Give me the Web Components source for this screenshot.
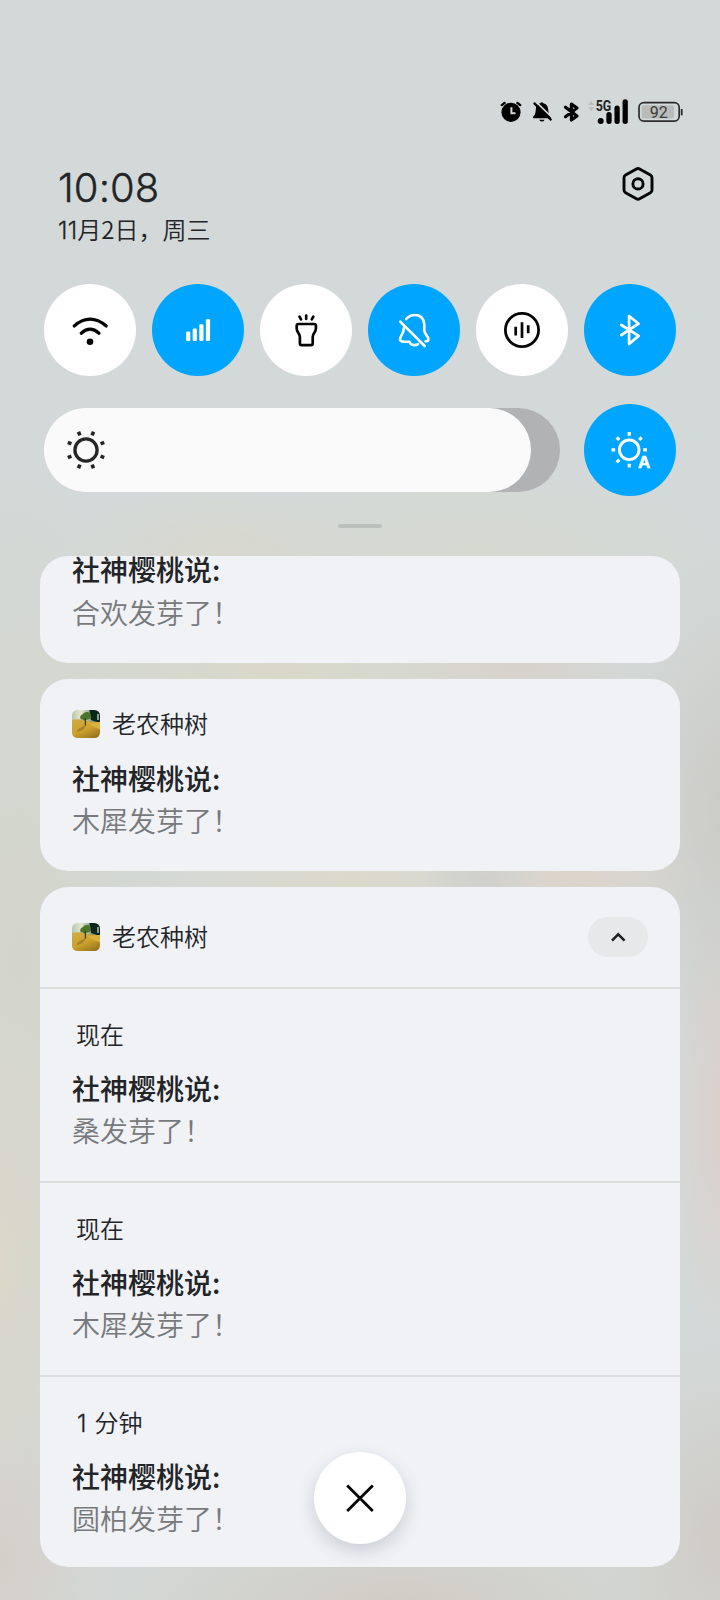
<!DOCTYPE html>
<html lang="zh-CN">
<head>
<meta charset="utf-8">
<title>通知中心</title>
<style>
html,body{margin:0;padding:0;height:100%}
body{font-family:"Noto Sans CJK SC",sans-serif;color:#222428;overflow:hidden}
.ones{font-family:Inter,sans-serif;font-weight:300;-webkit-text-stroke:.3px currentColor}
clock-header .ones{letter-spacing:.2px}
notice-item .ones{margin:0 6.5px 0 1px;line-height:1}
</style>
</head>
<body>
<notification-shade>
  <status-bar slot="status" battery="92"></status-bar>
  <clock-header slot="header" time="10:08"><span class="ones">11</span>月2日，周三</clock-header>
  <toggle-row slot="toggles">
    <quick-toggle icon="wifi"></quick-toggle>
    <quick-toggle icon="signal" on></quick-toggle>
    <quick-toggle icon="torch"></quick-toggle>
    <quick-toggle icon="mute" on></quick-toggle>
    <quick-toggle icon="sound"></quick-toggle>
    <quick-toggle icon="bluetooth" on></quick-toggle>
  </toggle-row>
  <brightness-row slot="brightness"></brightness-row>
  <notice-card style="height:106.5px">
    <notice-item cut><span slot="title">社神樱桃说:</span>合欢发芽了！</notice-item>
  </notice-card>
  <notice-card style="height:192px">
    <app-label style="margin-top:25.5px">老农种树</app-label>
    <notice-item style="--top:12.5px"><span slot="title">社神樱桃说:</span>木犀发芽了！</notice-item>
  </notice-card>
  <notice-card>
    <app-label style="height:100px" expandable>老农种树</app-label>
    <notice-item row><span slot="time">现在</span><span slot="title">社神樱桃说:</span>桑发芽了！</notice-item>
    <notice-item row><span slot="time">现在</span><span slot="title">社神樱桃说:</span>木犀发芽了！</notice-item>
    <notice-item row style="height:192px"><span slot="time"><span class="ones">1</span>&#8202;分钟</span><span slot="title">社神樱桃说:</span>圆柏发芽了！</notice-item>
  </notice-card>
  <close-button slot="overlay"></close-button>
</notification-shade>
<script>
const define = (name, html) => customElements.define(name, class extends HTMLElement {
  connectedCallback() {
    if (this.shadowRoot) return;
    const t = document.createElement('template');
    t.innerHTML = typeof html === 'function' ? html(this) : html;
    this.attachShadow({mode: 'open'}).append(t.content.cloneNode(true));
  }
});

const rays = (cx, cy, r1, r2, angles) => angles.map(a => {
  const c = Math.cos(a * Math.PI / 180), s = Math.sin(a * Math.PI / 180);
  return `M${(cx + r1 * c).toFixed(2)} ${(cy + r1 * s).toFixed(2)}L${(cx + r2 * c).toFixed(2)} ${(cy + r2 * s).toFixed(2)}`;
}).join('');

const ICONS = {
  wifi: '<g stroke-width="3.2"><path d="M30.2 42Q46 28.4 62.2 42M37.2 49.2Q46 41.2 55 49.2"/></g><circle cx="46" cy="57.7" r="3.3" fill="currentColor" stroke="none"/>',
  signal: '<g fill="currentColor" stroke="none"><rect x="34.1" y="47.5" width="4.2" height="9.5" rx="1.3"/><rect x="40.7" y="44.6" width="4.2" height="12.4" rx="1.3"/><rect x="47.3" y="40.3" width="4.2" height="16.7" rx="1.3"/><rect x="53.9" y="35" width="4.2" height="22" rx="1.3"/></g>',
  torch: '<path d="M38.4 40H54.2Q55.9 40 55.9 41.7V44.6C55.9 49 52.7 48.7 52.7 53V59.3Q52.7 61.2 50.9 61.2H41.7Q39.9 61.2 39.9 59.3V53C39.9 48.7 36.7 49 36.7 44.6V41.7Q36.7 40 38.4 40Z"/><path d="M39.5 32.7L41 35.4M46.2 31.6V34.8M53.3 32.7L51.8 35.4"/>',
  mute: '<g stroke-width="2.6"><path d="M32.2 37.7L56.7 62"/><path d="M38.2 35C41 31.7 44 31 47 31C52.7 31 56.3 35.2 56.3 40.5V46C56.3 51 60.4 52 60.4 55.2Q60.4 57.3 57.6 57.3"/><path d="M35.9 43.5C35.9 50.8 32 51.7 32 55C32 57.2 33.7 57.7 36 57.7H41.5C42.4 61.3 47.2 62 50 60.1"/></g>',
  sound: '<circle cx="46" cy="46" r="16.6" stroke-width="2.8"/><path stroke-linecap="butt" stroke-width="2.7" d="M39.7 42.8V51.4M46 38.2V54.1M52.2 41.3V49.2"/>',
  bluetooth: '<path d="M37.3 41L54.6 51.9L45.1 60V32L54.6 39.7L37.3 51"/>',
  auto: `<circle cx="45.2" cy="45.8" r="9.8" stroke-width="2.9"/><path stroke-linecap="butt" stroke-width="3.2" d="${rays(45.2, 45.8, 14, 17.7, [0, 90, 135, 180, 225, 270, 315])}"/><text x="54" y="63.6" fill="currentColor" stroke="currentColor" stroke-width=".6" font-family="Liberation Sans,sans-serif" font-weight="700" font-size="17">A</text>`
};
const svg = n => `<svg width="92" height="92" viewBox="0 0 92 92" fill="none" stroke="currentColor" stroke-width="2.7" stroke-linecap="round" stroke-linejoin="round">${ICONS[n]}</svg>`;

define('quick-toggle', el => `<style>
:host{display:block;width:92px;height:92px;border-radius:50%;background:#fff;color:#050505}
:host([on]){background:#00a5ff;color:#fff}
svg{display:block}
</style>${svg(el.getAttribute('icon'))}`);

define('toggle-row', `<style>:host{display:flex;justify-content:space-between;padding:0 44px}</style><slot></slot>`);

define('brightness-row', `<style>
:host{display:flex;align-items:center;justify-content:space-between;padding:0 44px}
.track{width:516px;height:84px;border-radius:42px;background:linear-gradient(90deg,#fafafa 50%,#b0b2b4 50%);overflow:hidden}
.fill{width:487px;height:84px;border-radius:42px;background:#fafafa;color:#252525}
svg{display:block}
</style>
<div class="track"><div class="fill"><svg width="84" height="84" viewBox="0 0 84 84" fill="none" stroke="currentColor" stroke-width="3.3"><circle cx="42" cy="42" r="11.1"/><path stroke-width="3.6" d="${rays(42, 42, 15.8, 19.7, [22.5, 67.5, 112.5, 157.5, 202.5, 247.5, 292.5, 337.5])}"/></svg></div></div>
<quick-toggle icon="auto" on></quick-toggle>`);

define('status-bar', el => `<style>
:host{display:flex;justify-content:flex-end;padding-right:36px;color:#000}
svg{display:block}
</style>
<svg width="204" height="40" viewBox="480 92 204 40">
  <circle cx="511" cy="112.3" r="9.6"/>
  <path d="M501.8 105.1L504.6 102.9M520.2 105.1L517.4 102.9" stroke="#000" stroke-width="2.4" stroke-linecap="round"/>
  <path d="M511.4 107.3V113.2H515.5" fill="none" stroke="#d5d9d8" stroke-width="2"/>
  <path d="M533 116.8C535.4 115 535.6 112.5 535.8 109.6C536.1 105.3 538 103.9 540.3 103.2Q541.8 101.5 543.3 103.2C546.5 104 548.1 106 548.2 109.6C548.3 112.5 548.8 115 551 116.8Q551.6 118.3 550 118.3H534Q532.6 118.3 533 116.8ZM539 119.7H544.7Q542 123.5 539 119.7Z"/>
  <path d="M535.8 101.7L553 118.3" stroke="#d4d9d8" stroke-width="1.6"/>
  <path d="M534.4 103.4L550.8 119.6" stroke="#000" stroke-width="2.2" stroke-linecap="round"/>
  <path d="M565.5 107.2L577 116L571.4 120V104L577 108L565.5 116.7" fill="none" stroke="#000" stroke-width="3.2" stroke-linecap="round" stroke-linejoin="round"/>
  <path d="M588 105L591.2 101L594.4 105ZM588 107.2L591.2 111L594.4 107.2Z" fill="#b9bdbc"/>
  <circle cx="600.7" cy="121" r="3"/>
  <path d="M609 114.6V121.3M617.1 108.2V121.3M625.2 101.8V121.3" stroke="#000" stroke-width="5.3" stroke-linecap="round"/>
  <text x="595.7" y="110.6" font-family="Roboto,sans-serif" font-weight="700" font-size="14" textLength="15.6" lengthAdjust="spacingAndGlyphs" fill="#222" stroke="#d4d9d8" stroke-width="1.5" paint-order="stroke">5G</text>
  <rect x="639" y="102.7" width="40.2" height="18.4" rx="4.8" fill="none" stroke="#2b2d2d" stroke-width="1.7"/>
  <rect x="641.6" y="105.2" width="32.4" height="13.4" rx="2.5" fill="#babcbc"/>
  <path d="M681.7 109V115.3" stroke="#2b2d2d" stroke-width="1.8"/>
  <text x="658.8" y="117.8" text-anchor="middle" font-family="Roboto,sans-serif" font-size="16" fill="#3b3b3b">${el.getAttribute('battery')}</text>
</svg>`);

define('clock-header', el => `<style>
:host{display:flex;justify-content:space-between;padding:0 64px 0 58px}
.time{font:300 40px/48px Inter,sans-serif;-webkit-text-stroke:.4px currentColor;letter-spacing:.1px;height:48px;margin-top:-.5px}
.date{font:350 24px/32px "Noto Sans CJK SC",sans-serif;margin-top:1px}
svg{display:block;margin-top:2px}
</style>
<div><div class="time">${el.getAttribute('time')}</div><div class="date"><slot></slot></div></div>
<svg width="36" height="36" viewBox="0 0 36 36" fill="none" stroke="#050505" stroke-width="2.9" stroke-linejoin="round"><path d="M16.4 2.9Q18 2 19.6 2.9L30.4 9Q32 9.9 32 11.7V24Q32 25.8 30.4 26.7L19.6 32.8Q18 33.7 16.4 32.8L5.6 26.7Q4 25.8 4 24V11.7Q4 9.9 5.6 9Z"/><circle cx="18" cy="17.9" r="5.1"/></svg>`);

define('app-label', el => `<style>
:host{display:flex;align-items:center;height:40px;padding:0 32px;box-sizing:border-box;font-size:24px;line-height:36px;font-weight:350}
.icon{display:block;margin-right:12px;flex:none}
.name{position:relative;top:-1px}
.pill{margin-left:auto;width:60px;height:40px;border-radius:20px;background:#e7e8ea}
.pill svg{display:block}
</style>
<svg class="icon" width="28" height="28" viewBox="0 0 28 28">
  <defs><clipPath id="c"><rect width="28" height="28" rx="5.5"/></clipPath>
  <linearGradient id="s" x2="1" y2="0"><stop offset="0" stop-color="#aebfa2"/><stop offset=".35" stop-color="#e3e8d2"/><stop offset="1" stop-color="#34533c"/></linearGradient>
  <linearGradient id="g" x2=".7" y2="1"><stop offset="0" stop-color="#cfac46"/><stop offset=".55" stop-color="#cda22c"/><stop offset="1" stop-color="#936f1f"/></linearGradient>
  <filter id="f"><feGaussianBlur stdDeviation=".6"/></filter></defs>
  <g clip-path="url(#c)"><g filter="url(#f)">
  <path fill="url(#s)" d="M-2-2H30V15H-2Z"/>
  <path fill="#0e281f" d="M17-2H30V13L25 12L19 10Z"/><path fill="#a9bda6" d="M25.2 4H26.8V10H25.2Z"/>
  <path fill="url(#g)" d="M-2 10.5Q6 8 14 10.5T30 11.5V30H-2Z"/>
  <path fill="#d9b23a" d="M15 13L30 12V20Q22 18 15 13Z"/>
  <path fill="#96762a" d="M5 20Q9 17 13.5 15Q13 18.5 10 20.5L5 22Z" opacity=".7"/>
  <path fill="#4b7529" d="M8.2 8Q8 5 11 4Q12 1.5 16 2Q19.5 3 18.5 6Q18.5 10 15 9.5Q12 11.5 10.7 9.2Q8.5 10 8.2 8Z"/>
  <path stroke="#27381b" stroke-width="1.1" d="M13.4 8V15.5"/>
  </g></g>
</svg><span class="name"><slot></slot></span>
${el.hasAttribute('expandable') ? '<div class="pill"><svg width="60" height="40" viewBox="0 0 60 40" fill="none" stroke="#1d1e20" stroke-width="2.5"><path d="M24 23.6L30.2 17.3L36.6 23.6"/></svg></div>' : ''}`);

define('notice-item', `<style>
:host{display:block;padding:var(--top,0) 32px 0;box-sizing:border-box}
:host([row]){height:194px;border-top:2px solid #dcdddd;padding-top:0}
.time{font-size:24px;line-height:36px;height:36px;margin:27.5px 0 0 4px;font-weight:350;display:none}
:host([row]) .time{display:flow-root}
:host([row]) .title{margin-top:14.5px}
:host([row]){display:flow-root}
.title{font-size:28px;line-height:42px;font-weight:500;color:#222428}
.body{font-size:28px;line-height:42px;font-weight:350;color:#77797d;margin-top:.5px}
:host([cut]) .title{line-height:26px}
:host([cut]) .body{margin-top:9px}
</style>
<div class="time"><slot name="time"></slot></div>
<div class="title"><slot name="title"></slot></div>
<div class="body"><slot></slot></div>`);

define('notice-card', `<style>:host{display:flow-root;border-radius:28px;background:#f0f2f6;overflow:hidden;box-sizing:border-box;flex:none}</style><slot></slot>`);

define('close-button', `<style>
:host{display:block;width:92px;height:92px;border-radius:50%;background:#fff;box-shadow:0 7px 18px rgba(50,60,75,.2)}
svg{display:block}
</style><svg width="92" height="92" viewBox="0 0 92 92" stroke="#050505" stroke-width="2.8"><path d="M33.2 33.5L58.8 59.1M58.8 33.5L33.2 59.1"/></svg>`);

define('notification-shade', `<style>
:host{display:flex;flex-direction:column;position:relative;width:720px;height:1600px;overflow:hidden;box-sizing:border-box;padding-top:92px;
background:
radial-gradient(ellipse 150px 60px at 215px 550px,rgba(219,215,198,.6),transparent),
radial-gradient(ellipse 260px 90px at 470px 560px,rgba(217,217,203,.65),transparent),
radial-gradient(ellipse 300px 110px at 280px 670px,rgba(218,216,199,.85),transparent),
radial-gradient(ellipse 130px 40px at 515px 670px,rgba(216,208,202,.9),transparent),
radial-gradient(ellipse 60px 40px at 480px 878px,rgba(205,205,203,.8),transparent),
radial-gradient(ellipse 130px 50px at 575px 878px,rgba(221,211,200,.95),transparent),
radial-gradient(ellipse 220px 90px at 350px 878px,rgba(221,217,202,.9),transparent),
radial-gradient(ellipse 110px 260px at 725px 810px,rgba(204,203,198,1),transparent),
radial-gradient(ellipse 60px 220px at 725px 1120px,rgba(220,207,202,1),transparent),
radial-gradient(ellipse 90px 260px at 0px 1260px,rgba(219,215,202,1),transparent),
radial-gradient(ellipse 160px 500px at 20px 960px,rgba(212,213,201,.95),transparent),
radial-gradient(ellipse 120px 210px at 0px 1560px,rgba(213,207,201,1),transparent),
radial-gradient(ellipse 330px 90px at 400px 1600px,rgba(209,205,197,1),transparent),
radial-gradient(ellipse 120px 200px at 720px 1540px,rgba(207,203,197,1),transparent),
#d3d9d8}
slot{display:block}
.status{height:40px}
.header{margin-top:32px;height:120px}
.bright{margin-top:28px}
.handle{width:44px;height:4px;border-radius:2px;background:#bcc0bc;margin:28px auto;flex:none}
.list{display:flex;flex-direction:column;gap:16px;padding:0 40px}
.overlay{position:absolute;left:314px;top:1452px}
</style>
<slot class="status" name="status"></slot>
<slot class="header" name="header"></slot>
<slot name="toggles"></slot>
<slot class="bright" name="brightness"></slot>
<div class="handle"></div>
<div class="list"><slot style="display:contents"></slot></div>
<div class="overlay"><slot name="overlay"></slot></div>`);
</script>
</body>
</html>
